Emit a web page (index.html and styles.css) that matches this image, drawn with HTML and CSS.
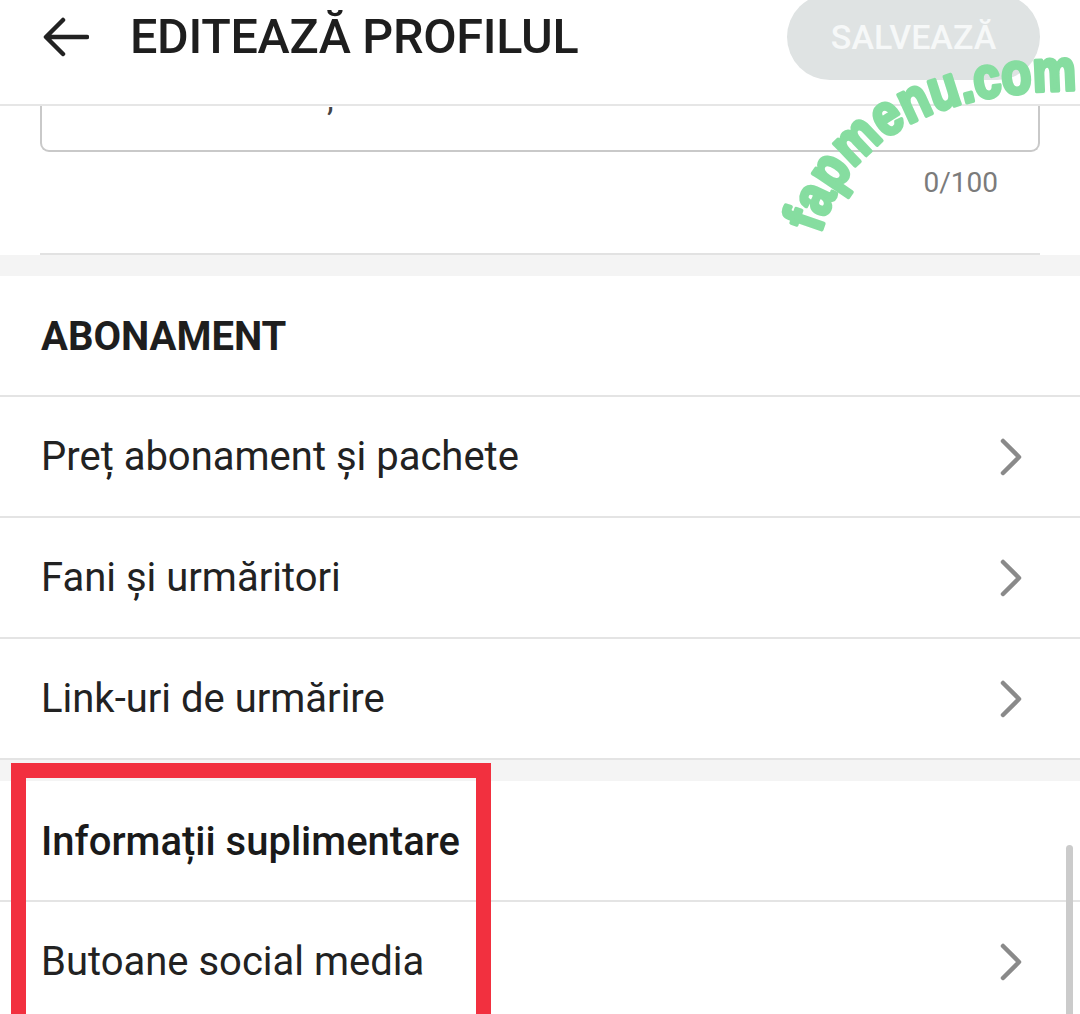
FILE: index.html
```html
<!DOCTYPE html>
<html lang="ro">
<head>
<meta charset="utf-8">
<title>Editează profilul</title>
<link rel="stylesheet" href="styles.css">
</head>
<body>
<div class="screen">
  <header class="topbar">
    <div class="topbar-row">
      <button class="back" aria-label="Înapoi">
        <svg width="46" height="40" viewBox="0 0 46 40"><path d="M44 20H4M20 3L3 20l17 17" fill="none" stroke="#222" stroke-width="4.5" stroke-linecap="round" stroke-linejoin="round"/></svg>
      </button>
      <h1 class="title">EDITEAZĂ PROFILUL</h1>
      <button class="save">SALVEAZĂ</button>
    </div>
  </header>

  <section class="bio">
    <div class="textarea"><span class="peek">,</span></div>
    <div class="counter">0/100</div>
    <div class="bio-rule"></div>
  </section>

  <div class="band"></div>

  <section class="group">
    <div class="group-head">ABONAMENT</div>
    <a class="row"><span>Preț abonament și pachete</span><svg class="chev" width="24" height="38" viewBox="0 0 24 38"><path d="M4 3l16 16L4 35" fill="none" stroke="#8a8a8a" stroke-width="4.5" stroke-linecap="round" stroke-linejoin="round"/></svg></a>
    <a class="row"><span>Fani și urmăritori</span><svg class="chev" width="24" height="38" viewBox="0 0 24 38"><path d="M4 3l16 16L4 35" fill="none" stroke="#8a8a8a" stroke-width="4.5" stroke-linecap="round" stroke-linejoin="round"/></svg></a>
    <a class="row"><span>Link-uri de urmărire</span><svg class="chev" width="24" height="38" viewBox="0 0 24 38"><path d="M4 3l16 16L4 35" fill="none" stroke="#8a8a8a" stroke-width="4.5" stroke-linecap="round" stroke-linejoin="round"/></svg></a>
  </section>

  <div class="band"></div>

  <section class="group">
    <div class="group-head sub">Informații suplimentare</div>
    <a class="row"><span>Butoane social media</span><svg class="chev" width="24" height="38" viewBox="0 0 24 38"><path d="M4 3l16 16L4 35" fill="none" stroke="#8a8a8a" stroke-width="4.5" stroke-linecap="round" stroke-linejoin="round"/></svg></a>
  </section>

  <div class="scrollbar"></div>
  <div class="highlight"></div>

  <svg class="watermark" width="1080" height="260" viewBox="0 0 1080 260">
    <defs><path id="wm" d="M820 234 C848 142 926 90 1082 90"/></defs>
    <text class="wm-text"><textPath href="#wm" textLength="318" lengthAdjust="spacingAndGlyphs">fapmenu.com</textPath></text>
  </svg>
</div>
</body>
</html>
```

FILE: styles.css
```css
* { box-sizing: border-box; }
html, body { margin: 0; padding: 0; background: #fff; }
body { font-family: Roboto, "Noto Sans", "Liberation Sans", sans-serif; color: #212121; }

.screen { position: relative; width: 1080px; height: 1014px; overflow: hidden; background: #fff; }

.topbar { border-bottom: 2px solid #e6e6e6; padding-bottom: 32px; background: #fff; }
.topbar-row { height: 72px; display: flex; align-items: center; padding: 0 40px 0 43px; }
.back { background: none; border: 0; padding: 0; width: 46px; height: 40px; display: flex; margin-top: 2px; }
.title { margin: 0 0 0 41px; font-size: 48.5px; font-weight: 500; letter-spacing: -0.3px; color: #1e1e1e; flex: 1; }
.save { width: 253px; height: 86px; border: 0; border-radius: 43px; background: #dfe3e3; color: #f6f8f8; font-family: inherit; font-size: 34px; font-weight: 500; padding: 0; margin-top: 2px; }

.bio { padding: 0 40px; }
.textarea { height: 46px; border: 2px solid #c9c9c9; border-top: 0; border-radius: 0 0 9px 9px; overflow: hidden; }
.peek { display: block; margin: -27px 0 0 285px; font-size: 34px; line-height: 40px; color: #444; }
.counter { text-align: right; padding-right: 42px; margin-top: 11px; font-size: 28px; line-height: 40px; color: #7b7b7b; }
.bio-rule { margin-top: 50px; border-top: 2px solid #e2e2e2; }

.band { height: 21px; background: #f4f4f4; }

.group { background: #fff; }
.group-head { height: 121px; display: flex; align-items: center; padding: 0 41px; border-bottom: 2px solid #e4e4e4; font-size: 40px; font-weight: 700; color: #1e1e1e; padding-top: 2px; }
.group-head.sub { font-size: 40px; font-weight: 500; color: #1a1a1a; }
.row { height: 121px; display: flex; align-items: center; justify-content: space-between; padding: 0 57px 0 41px; border-bottom: 2px solid #e4e4e4; font-size: 40px; color: #222; }
.chev { display: block; }

.scrollbar { position: absolute; left: 1066px; top: 845px; width: 7px; height: 200px; border-radius: 4px; background: #cbcbcb; }
.highlight { position: absolute; left: 11px; top: 763px; width: 480px; height: 300px; border: 15px solid #f2303f; }

.watermark { position: absolute; left: 0; top: 0; pointer-events: none; }
.wm-text { font-family: "Liberation Sans", Arial, sans-serif; font-weight: 700; font-size: 58px; fill: #86dda0; stroke: #86dda0; stroke-width: 4px; stroke-linejoin: round; }
```
